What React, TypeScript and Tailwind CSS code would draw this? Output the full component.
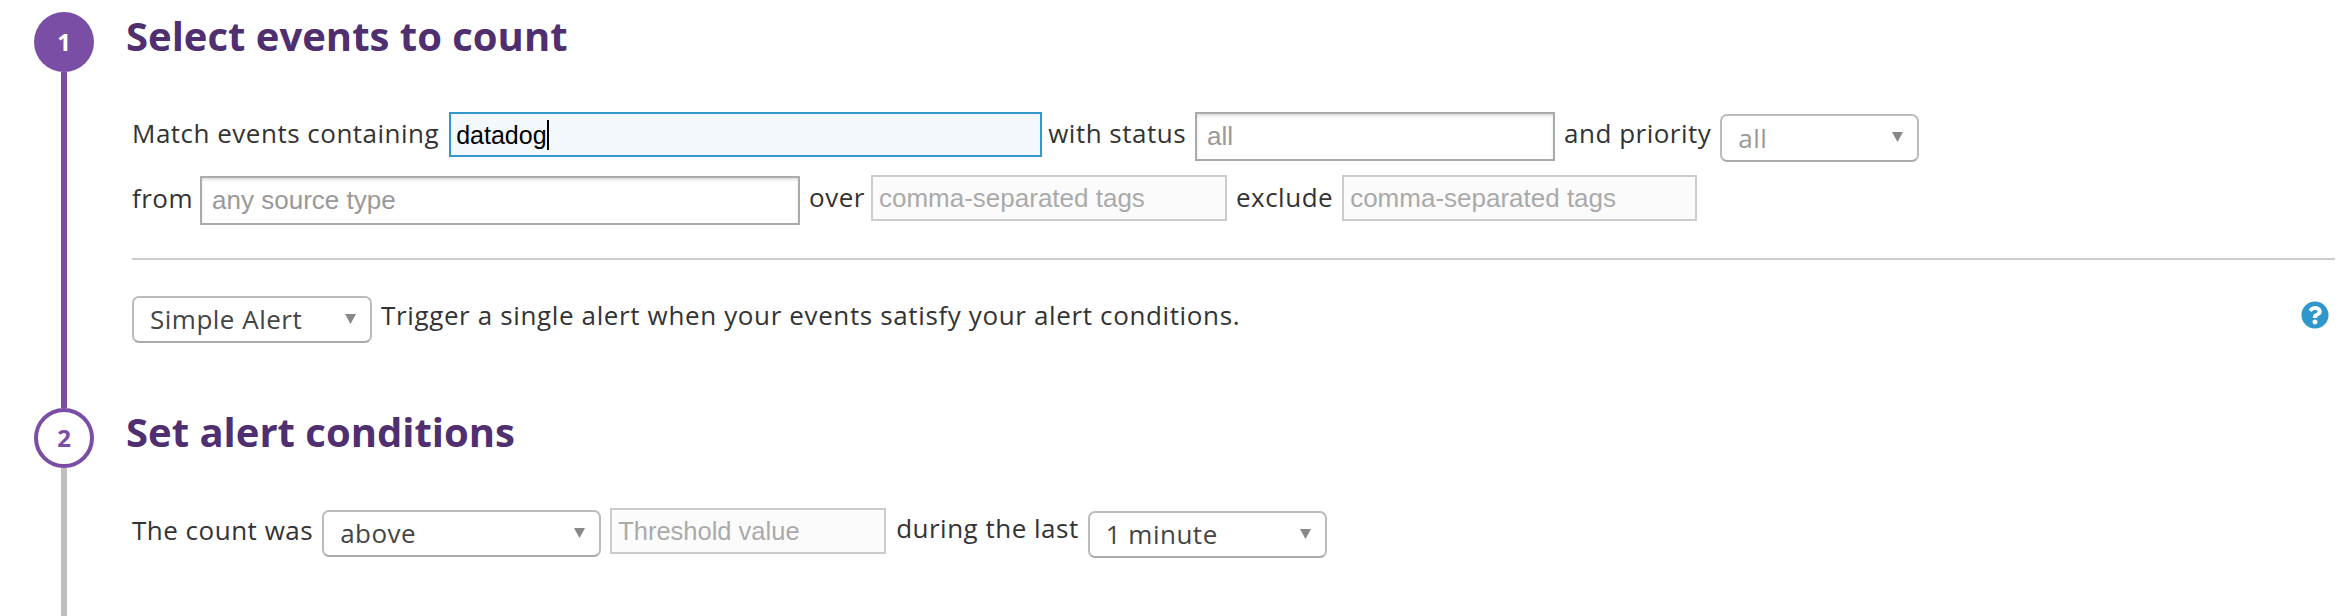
import React from 'react';
import { FaQuestionCircle } from 'react-icons/fa';

const bodyFont = "font-['Open_Sans','Liberation_Sans',sans-serif]";
const inputFont = "font-['Liberation_Sans',sans-serif]";

const Label: React.FC<{ children: React.ReactNode; className?: string }> = ({ children, className = '' }) => (
    <span className={`text-[26px] leading-[34px] tracking-[0.5px] text-[#333] whitespace-nowrap ${className}`}>{children}</span>
);

const Field: React.FC<{ placeholder: string; className: string }> = ({ placeholder, className }) => (
    <input
        readOnly
        placeholder={placeholder}
        className={`shrink-0 border-2 border-[#aaa] bg-white px-[10px] text-[26px] text-[#333] outline-none shadow-[inset_0_2px_3px_rgba(0,0,0,0.12)] placeholder:text-[#999] ${inputFont} ${className}`}
    />
);

const TagField: React.FC<{ placeholder: string; className: string }> = ({ placeholder, className }) => (
    <input
        readOnly
        placeholder={placeholder}
        className={`shrink-0 border-2 border-[#ccc] bg-[#fbfbfb] px-[6px] outline-none placeholder:text-[#aaa] ${inputFont} ${className}`}
    />
);

const Select: React.FC<{ value: string; className: string; muted?: boolean }> = ({ value, className, muted }) => (
    <div className={`flex shrink-0 items-center justify-between rounded-[7px] border-2 border-[#bbb] border-b-[#aaa] bg-white pl-[16px] pr-[14px] ${className}`}>
        <span className={`text-[26px] tracking-[0.5px] ${muted ? 'text-[#999]' : 'text-[#444]'}`}>{value}</span>
        <svg width="11" height="10" viewBox="0 0 11 10" className="mb-[2px]">
            <polygon points="0,0 11,0 5.5,10" fill="#888" />
        </svg>
    </div>
);

export default function App() {
    return (
        <div className={`flex h-[616px] w-[2352px] flex-col overflow-hidden bg-white pl-[34px] pt-[12px] ${bodyFont}`}>
            <section className="flex h-[396px] shrink-0">
                <div className="flex w-[60px] shrink-0 flex-col items-center">
                    <div className="flex h-[60px] w-[60px] items-center justify-center rounded-full bg-[#7b4ea6] text-[24px] font-bold text-white">1</div>
                    <div className="w-[6px] flex-1 bg-[#7b4ea6]" />
                </div>
                <div className="ml-[32px] flex-1">
                    <h2 className="mt-[-2px] text-[40px] font-bold leading-[52px] text-[#4f2f70]">Select events to count</h2>
                    <div className="ml-[6px] mt-[50px] w-[2203px]">
                        <div className="flex h-[49px] items-start">
                            <Label className="mt-[4px]">Match events containing</Label>
                            <div className="ml-[10px] flex h-[45px] w-[593px] shrink-0 items-center border-2 border-[#3498cc] bg-[#f3f8fc] px-[5px] text-[25px] text-black font-['Liberation_Sans',sans-serif]">
                                <span className="border-r-2 border-black leading-[30px]">datadog</span>
                            </div>
                            <Label className="ml-[6px] mt-[4px]">with status</Label>
                            <Field placeholder="all" className="ml-[9px] h-[49px] w-[360px]" />
                            <Label className="ml-[9px] mt-[4px]">and priority</Label>
                            <Select value="all" muted className="ml-[9px] mt-[2px] h-[48px] w-[199px]" />
                        </div>
                        <div className="mt-[15px] flex h-[49px] items-start">
                            <Label className="mt-[5px]">from</Label>
                            <Field placeholder="any source type" className="ml-[7px] h-[49px] w-[600px]" />
                            <Label className="ml-[9px] mt-[4px]">over</Label>
                            <TagField placeholder="comma-separated tags" className="ml-[6px] mt-[-1px] h-[46px] w-[356px] text-[26px]" />
                            <Label className="ml-[9px] mt-[4px]">exclude</Label>
                            <TagField placeholder="comma-separated tags" className="ml-[9px] mt-[-1px] h-[46px] w-[355px] text-[26px]" />
                        </div>
                        <div className="mt-[33px] h-[2px] bg-[#ccc]" />
                        <div className="mt-[36px] flex h-[47px] items-start">
                            <Select value="Simple Alert" className="h-[47px] w-[240px]" />
                            <Label className="ml-[9px] mt-[2px] !tracking-[0.63px]">Trigger a single alert when your events satisfy your alert conditions.</Label>
                            <FaQuestionCircle className="ml-auto mr-[6px] mt-[5px] text-[#2f97cc]" size={28} />
                        </div>
                    </div>
                </div>
            </section>
            <section className="flex flex-1">
                <div className="flex w-[60px] shrink-0 flex-col items-center">
                    <div className="flex h-[60px] w-[60px] items-center justify-center rounded-full border-[4px] border-[#7b4ea6] text-[24px] font-bold text-[#7b4ea6]">2</div>
                    <div className="w-[6px] flex-1 bg-[#bfbfbf]" />
                </div>
                <div className="ml-[32px] flex-1">
                    <h2 className="mt-[-2px] text-[40px] font-bold leading-[52px] text-[#4f2f70]">Set alert conditions</h2>
                    <div className="ml-[6px] mt-[50px] flex items-start">
                        <Label className="mt-[5px]">The count was</Label>
                        <Select value="above" className="ml-[9px] mt-[2px] h-[47px] w-[279px]" />
                        <TagField placeholder="Threshold value" className="ml-[9px] h-[46px] w-[276px] text-[25.5px]" />
                        <Label className="ml-[10px] mt-[3px]">during the last</Label>
                        <Select value="1 minute" className="ml-[9px] mt-[3px] h-[47px] w-[239px]" />
                    </div>
                </div>
            </section>
        </div>
    );
}
